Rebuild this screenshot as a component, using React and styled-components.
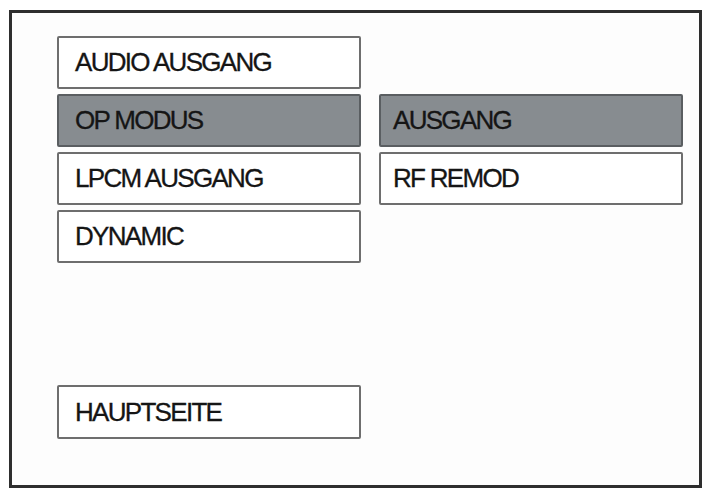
import React from "react";
import styled, { createGlobalStyle } from "styled-components";

const Global = createGlobalStyle`
  html, body { margin: 0; padding: 0; background: #ffffff; }
  body { font-family: "Liberation Sans", Arial, sans-serif; }
`;

const Frame = styled.div`
  box-sizing: border-box;
  margin: 10px 0 0 9px;
  width: 693px;
  height: 478px;
  border: 3px solid #2e2e2e;
  background: #fdfdfd;
  padding: 23px 0 0 45px;
  display: flex;
  gap: 18px;
  align-items: flex-start;
`;

const Column = styled.div`
  display: flex;
  flex-direction: column;
  gap: 5px;
  width: 304px;
  padding-top: ${(p) => p.$offset || 0}px;
`;

const Item = styled.div`
  box-sizing: border-box;
  height: ${(p) => p.$h || 53}px;
  margin-top: ${(p) => p.$mt || 0}px;
  border: 2px solid ${(p) => (p.$active ? "#5a5e61" : "#6e6e6e")};
  border-radius: 2px;
  background: ${(p) => (p.$active ? "#878c90" : "#ffffff")};
  display: flex;
  align-items: center;
  padding-left: ${(p) => p.$pl || 16}px;
  font-size: 26px;
  letter-spacing: -1.7px;
  color: #151515;
  -webkit-text-stroke: 0.3px #151515;
  white-space: nowrap;
`;

export default function App() {
  return (
    <>
      <Global />
      <Frame>
        <Column>
          <Item>AUDIO AUSGANG</Item>
          <Item $active>OP MODUS</Item>
          <Item>LPCM AUSGANG</Item>
          <Item>DYNAMIC</Item>
          <Item $mt={117} $h={54}>HAUPTSEITE</Item>
        </Column>
        <Column $offset={58}>
          <Item $active $pl={12}>AUSGANG</Item>
          <Item $pl={12}>RF REMOD</Item>
        </Column>
      </Frame>
    </>
  );
}
